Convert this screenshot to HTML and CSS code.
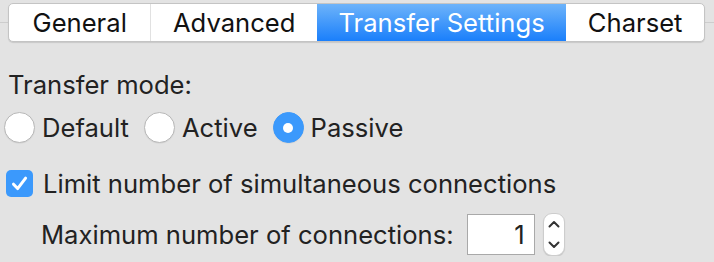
FILE: index.html
```html
<!DOCTYPE html>
<html lang="en">

<head>
	<meta charset="utf-8">
	<meta name="viewport" content="width=device-width, initial-scale=1.0">
	<title>Transfer Settings</title>
	<link rel="stylesheet" href="styles.css">
</head>

<body>
	<div class="tabstrip">
		<nav class="tabs">
			<div class="tab">General</div>
			<div class="tab">Advanced</div>
			<div class="tab active">Transfer Settings</div>
			<div class="tab">Charset</div>
		</nav>
	</div>

	<section class="panel">
		<p class="mode-label">Transfer mode:</p>

		<div class="radios">
			<label class="option"><span class="radio"></span>Default</label>
			<label class="option"><span class="radio"></span>Active</label>
			<label class="option"><span class="radio on"></span>Passive</label>
		</div>

		<label class="check">
			<span class="box">
				<svg width="27" height="27" viewBox="0 0 27 27">
					<path d="M7.5 14.2 L11.6 18.6 L19.6 8.2" fill="none" stroke="#fff" stroke-width="3" stroke-linecap="round" stroke-linejoin="round" />
				</svg>
			</span>
			Limit number of simultaneous connections
		</label>

		<div class="maxrow">
			<span>Maximum number of connections:</span>
			<span class="field">1</span>
			<span class="stepper">
				<svg width="22" height="43" viewBox="0 0 22 43">
					<path d="M6.5 13.5 L11 9 L15.5 13.5" fill="none" stroke="#333" stroke-width="2" stroke-linecap="round" stroke-linejoin="round" />
					<path d="M6.5 29.5 L11 34 L15.5 29.5" fill="none" stroke="#333" stroke-width="2" stroke-linecap="round" stroke-linejoin="round" />
				</svg>
			</span>
		</div>
	</section>
</body>

</html>
```

FILE: styles.css
```css
body {
	margin: 0;
	background-color: #e3e3e3;
	font-family: Inter, "Liberation Sans", sans-serif;
	font-size: 25.6px;
	color: #222;
}

/*____________________Tabs____________________*/

.tabstrip {
	padding: 3px 9px 0 8px;
	background: linear-gradient(#cdcdcd, #cdcdcd) 0 22px / 100% 1px no-repeat;
}

.tabs {
	display: flex;
	height: 39px;
	box-sizing: border-box;
	border: 1px solid #c4c4c4;
	border-radius: 5px;
	background-color: #fff;
	overflow: hidden;
	box-shadow: 0 1px 1px rgba(0, 0, 0, 0.12);
}

.tab {
	flex: 1 1 auto;
	display: flex;
	align-items: center;
	justify-content: center;
	padding: 0 20px;
	white-space: nowrap;
	border-left: 1px solid #e1e1e1;
	color: #111;
}

.tab:first-child {
	border-left: 0;
	padding: 0 22px;
}

.tab.active {
	background: linear-gradient(#6db3fa, #1a7ffb);
	color: #fff;
	border-left: 0;
}

.tab.active + .tab {
	border-left: 0;
}

/*____________________Panel____________________*/

.mode-label {
	margin: 28px 0 0 8px;
	line-height: 30px;
}

.radios {
	display: flex;
	align-items: center;
	height: 31px;
	margin: 12px 0 0 4px;
}

.option {
	display: flex;
	align-items: center;
	gap: 7px;
	margin-right: 15px;
}

.radio {
	display: flex;
	align-items: center;
	justify-content: center;
	width: 31px;
	height: 31px;
	box-sizing: border-box;
	border-radius: 50%;
	border: 1px solid #b8b8b8;
	background-color: #fff;
	box-shadow: 0 0.5px 1px rgba(0, 0, 0, 0.08);
}

.radio.on {
	background-color: #3b99fc;
	border-color: #3b99fc;
}

.radio.on::after {
	content: "";
	width: 10px;
	height: 10px;
	border-radius: 50%;
	background-color: #fff;
}

.check {
	display: flex;
	align-items: center;
	gap: 10px;
	height: 31px;
	margin: 25px 0 0 6px;
}

.box {
	display: block;
	width: 27px;
	height: 27px;
	border-radius: 5px;
	background-color: #3b99fc;
}

.box svg {
	display: block;
}

.maxrow {
	display: flex;
	align-items: center;
	height: 43px;
	margin: 14px 0 0 41px;
}

.field {
	width: 68px;
	height: 41px;
	box-sizing: border-box;
	margin-left: 13px;
	padding-right: 9px;
	border: 1px solid #a9a9a9;
	background-color: #fff;
	text-align: right;
	line-height: 39px;
}

.stepper {
	width: 22px;
	height: 43px;
	margin-left: 8px;
	box-sizing: border-box;
	border-radius: 9px;
	border: 1px solid #cdcdcd;
	background-color: #fff;
	box-shadow: 0 1px 1px rgba(0, 0, 0, 0.12);
}

.stepper svg {
	display: block;
	margin: -1px;
}
```
